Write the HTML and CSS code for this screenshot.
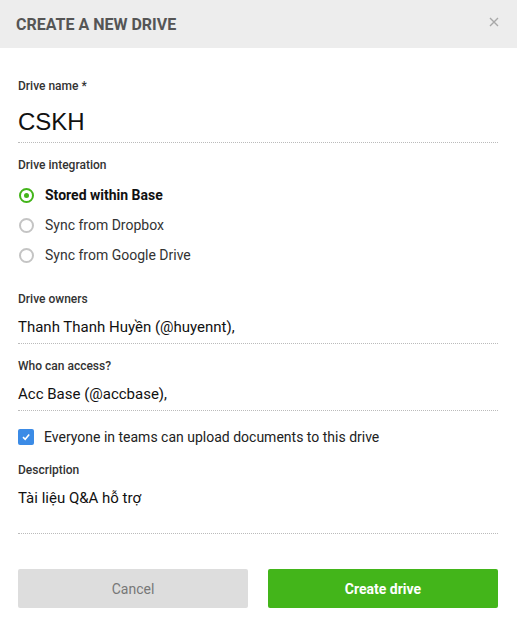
FILE: index.html
```html
<!DOCTYPE html>
<html>
<head>
<meta charset="utf-8">
<link rel="stylesheet" href="styles.css">
</head>
<body>
<div class="modal">
  <div class="header">
    <div class="title">CREATE A NEW DRIVE</div>
    <svg class="close" width="10" height="10" viewBox="0 0 10 10"><path d="M1 1L9 9M9 1L1 9" stroke="#a8a8a8" stroke-width="1.4"/></svg>
  </div>
  <div class="body">
    <div class="field">
      <div class="label">Drive name *</div>
      <div class="input big">CSKH</div>
    </div>
    <div class="field group">
      <div class="label">Drive integration</div>
      <div class="radios">
        <div class="radio on"><span class="dot"></span><span>Stored within Base</span></div>
        <div class="radio"><span class="dot"></span><span>Sync from Dropbox</span></div>
        <div class="radio"><span class="dot"></span><span>Sync from Google Drive</span></div>
      </div>
    </div>
    <div class="field">
      <div class="label">Drive owners</div>
      <div class="input">Thanh Thanh Huyền (@huyennt),</div>
    </div>
    <div class="field">
      <div class="label">Who can access?</div>
      <div class="input">Acc Base (@accbase),</div>
    </div>
    <div class="check">
      <span class="box"><svg width="10" height="10" viewBox="0 0 10 10"><path d="M2 5.2L4.2 7.3L8.2 2.6" fill="none" stroke="#fff" stroke-width="1.6"/></svg></span>
      <span>Everyone in teams can upload documents to this drive</span>
    </div>
    <div class="field">
      <div class="label">Description</div>
      <div class="input desc">Tài liệu Q&amp;A hỗ trợ</div>
    </div>
    <div class="actions">
      <button class="btn cancel">Cancel</button>
      <button class="btn create">Create drive</button>
    </div>
  </div>
</div>
</body>
</html>
```
FILE: styles.css
```css
* { box-sizing: border-box; }
html, body { margin: 0; padding: 0; background: #fff; }
body { font-family: Roboto, "Noto Sans", sans-serif; color: #111; }
.modal { width: 517px; height: 638px; background: #fff; }
.header {
  height: 48px; background: #ededed;
  display: flex; align-items: center; justify-content: space-between;
  padding: 0 18px 0 16px;
}
.title { font-size: 16px; font-weight: 700; color: #555; }
.close { margin-top: -4px; }
.body { padding: 30px 19px 0 18px; }
.field { display: flex; flex-direction: column; }
.label { font-size: 12px; font-weight: 500; color: #333; line-height: 16px; }
.input {
  font-size: 15px; line-height: 20px; color: #111;
  padding: 10px 0 6px; border-bottom: 1px dotted #bbb; margin-bottom: 14px;
}
.input.big { font-family: "Liberation Sans", Arial, sans-serif; font-size: 24px; line-height: 28px; padding: 14px 0 6px; margin-bottom: 14px; }
.input.desc { padding: 10px 0 25px; margin-bottom: 0; }
.radios { display: flex; flex-direction: column; padding-top: 7px; margin-bottom: 21px; }
.radio { display: flex; align-items: center; gap: 11px; height: 30px; font-size: 14px; color: #333; }
.radio .dot {
  width: 15px; height: 15px; border-radius: 50%; border: 2px solid #c4c4c4; margin-left: 1px;
  display: flex; align-items: center; justify-content: center;
}
.radio.on { font-weight: 700; color: #111; }
.radio.on .dot { border-color: #43b51a; }
.radio.on .dot::after { content: ""; width: 5px; height: 5px; border-radius: 50%; background: #43b51a; }
.check { display: flex; align-items: center; gap: 10px; font-size: 14px; color: #222; height: 16px; margin: 4px 0 17px; }
.check .box { width: 16px; height: 16px; border-radius: 2px; background: #3b8be6; display: flex; align-items: center; justify-content: center; }
.actions { display: flex; gap: 20px; margin-top: 35px; }
.btn {
  flex: 1; height: 39px; border: none; border-radius: 2px;
  font-family: Roboto, sans-serif; font-size: 14px;
}
.cancel { background: #dddddd; color: #777; }
.create { background: #43b51a; color: #fff; font-weight: 700; }
```
